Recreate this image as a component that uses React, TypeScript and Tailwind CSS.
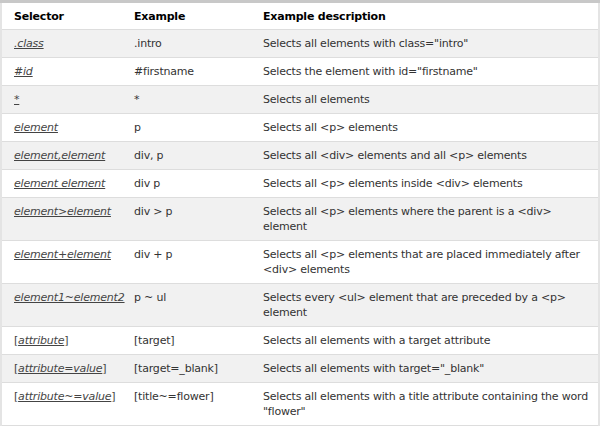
const rows: { sel: React.ReactNode; ex: string; desc: string }[] = [
  { sel: <a className="italic underline">.class</a>, ex: '.intro', desc: 'Selects all elements with class="intro"' },
  { sel: <a className="italic underline">#id</a>, ex: '#firstname', desc: 'Selects the element with id="firstname"' },
  { sel: <a className="italic underline">*</a>, ex: '*', desc: 'Selects all elements' },
  { sel: <a className="italic underline">element</a>, ex: 'p', desc: 'Selects all <p> elements' },
  { sel: <a className="italic underline">element,element</a>, ex: 'div, p', desc: 'Selects all <div> elements and all <p> elements' },
  { sel: <a className="italic underline">element element</a>, ex: 'div p', desc: 'Selects all <p> elements inside <div> elements' },
  { sel: <a className="italic underline">element&gt;element</a>, ex: 'div > p', desc: 'Selects all <p> elements where the parent is a <div> element' },
  { sel: <a className="italic underline">element+element</a>, ex: 'div + p', desc: 'Selects all <p> elements that are placed immediately after <div> elements' },
  { sel: <a className="italic underline">element1~element2</a>, ex: 'p ~ ul', desc: 'Selects every <ul> element that are preceded by a <p> element' },
  { sel: <>[<a className="italic underline">attribute</a>]</>, ex: '[target]', desc: 'Selects all elements with a target attribute' },
  { sel: <>[<a className="italic underline">attribute=value</a>]</>, ex: '[target=_blank]', desc: 'Selects all elements with target="_blank"' },
  { sel: <>[<a className="italic underline">attribute~=value</a>]</>, ex: '[title~=flower]', desc: 'Selects all elements with a title attribute containing the word "flower"' },
]

export default function App() {
  return (
    <div className="w-[600px] h-[426px] bg-white overflow-hidden font-['DejaVu_Sans','Verdana',sans-serif] text-[11px] tracking-[-0.2px] leading-[15px] text-[#333]">
      <table className="w-[600px] table-fixed border-collapse border-t-[3px] border-t-[#c8c8c8] border-x-2 border-x-[#e4e4e4] border-b border-b-[#ddd]">
        <colgroup>
          <col className="w-[133px]" />
          <col className="w-[129px]" />
          <col />
        </colgroup>
        <thead>
          <tr className="border-b border-[#ddd] text-black">
            <th className="text-left font-bold pl-[12px] pt-[6px] pb-[5px]">Selector</th>
            <th className="text-left font-bold pt-[6px] pb-[5px]">Example</th>
            <th className="text-left font-bold pt-[6px] pb-[5px]">Example description</th>
          </tr>
        </thead>
        <tbody>
          {rows.map((r, i) => (
            <tr key={i} className={`border-b border-[#ddd] align-top ${i % 2 === 0 ? 'bg-[#f1f1f1]' : 'bg-white'}`}>
              <td className="pl-[12px] py-[6px] text-[#444]">{r.sel}</td>
              <td className="py-[6px]">{r.ex}</td>
              <td className="py-[6px] pr-[6px]">{r.desc}</td>
            </tr>
          ))}
        </tbody>
      </table>
    </div>
  )
}
